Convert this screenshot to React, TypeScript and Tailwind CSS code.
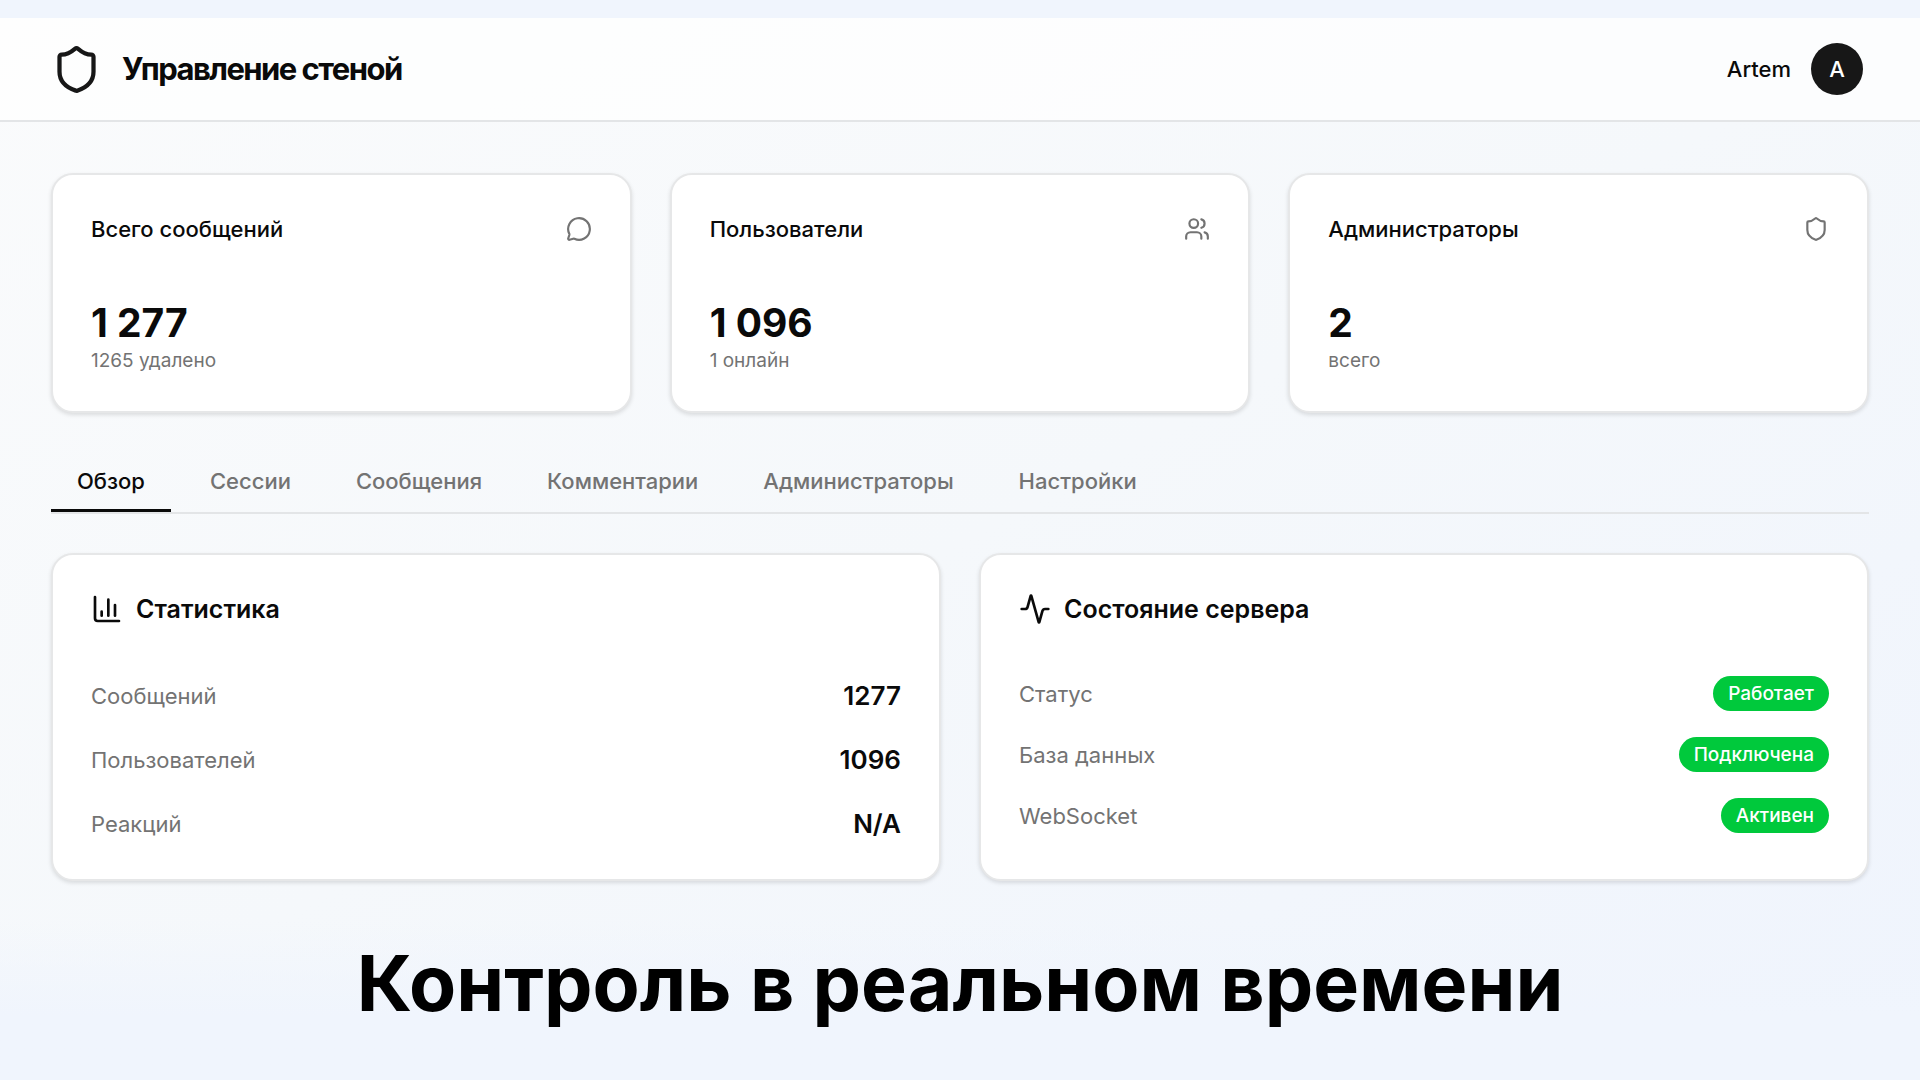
import type { ReactNode } from "react";
import { Activity, MessageCircle, Shield, Users } from "lucide-react";

function ChartIcon() {
  return (
    <svg viewBox="0 0 24 24" fill="none" stroke="currentColor" strokeWidth="2" strokeLinecap="round" strokeLinejoin="round" className="size-8" aria-hidden="true">
      <path d="M3 3v16a2 2 0 0 0 2 2h16" />
      <path d="M18 17V9" />
      <path d="M13 17V5" />
      <path d="M8 17v-3" />
    </svg>
  );
}

const card = "rounded-[22px] border-2 border-[#e6e7e8] bg-white shadow-[0_2px_4px_rgba(0,0,0,0.12)]";

function StatCard({ title, value, note, icon }: { title: string; value: string; note: string; icon: ReactNode }) {
  return (
    <section className={`${card} p-[38px]`}>
      <div className="flex items-center justify-between">
        <h2 className="text-[22px] leading-8 font-medium">{title}</h2>
        <span className="text-[#737373]">{icon}</span>
      </div>
      <p className="mt-[52px] text-[39px] leading-[52px] font-bold">{value}</p>
      <p className="text-[19px] leading-6 text-[#737373]">{note}</p>
    </section>
  );
}

function PanelTitle({ icon, children }: { icon: ReactNode; children: string }) {
  return (
    <h2 className="flex items-center gap-[13px] text-[25px] leading-8 font-semibold">
      {icon}
      {children}
    </h2>
  );
}

const tabs = ["Обзор", "Сессии", "Сообщения", "Комментарии", "Администраторы", "Настройки"];

const stats = [
  ["Сообщений", "1277"],
  ["Пользователей", "1096"],
  ["Реакций", "N/A"],
];

const services = [
  ["Статус", "Работает"],
  ["База данных", "Подключена"],
  ["WebSocket", "Активен"],
];

export default function App() {
  return (
    <div className="min-h-screen bg-[#f0f5fd] pt-[18px] font-[Inter,sans-serif] text-[#0a0a0a]">
      <div className="bg-linear-to-br from-[#fafbfc] via-[#f5f8fb] to-[#eff4fd]">
        <header className="flex items-center justify-between border-b-2 border-[#e3e5e7] bg-white/70 py-[25px] pr-[57px] pl-[51px]">
          <div className="flex items-center gap-5">
            <Shield className="size-[51px] text-[#171717]" strokeWidth={2} />
            <h1 className="text-[31px] leading-10 font-bold tracking-tighter">Управление стеной</h1>
          </div>
          <div className="flex items-center gap-5">
            <span className="text-[22px] leading-8 font-medium">Artem</span>
            <span className="flex size-[52px] items-center justify-center rounded-full bg-[#171717] text-[22px] font-medium text-white">A</span>
          </div>
        </header>

        <main className="px-[51px] pt-[51px]">
          <div className="grid grid-cols-3 gap-[38px]">
            <StatCard title="Всего сообщений" value="1 277" note="1265 удалено" icon={<MessageCircle className="size-[26px]" />} />
            <StatCard title="Пользователи" value="1 096" note="1 онлайн" icon={<Users className="size-[26px]" />} />
            <StatCard title="Администраторы" value="2" note="всего" icon={<Shield className="size-[26px]" />} />
          </div>

          <nav role="tablist" className="mt-[39px] flex gap-[13px] border-b-2 border-[#e3e5e7]">
            {tabs.map((tab, i) => (
              <button
                key={tab}
                type="button"
                role="tab"
                aria-selected={i === 0}
                className="border-b-[3px] border-transparent px-[26px] pt-[13px] pb-3 text-[22px] leading-8 font-medium text-[#737373] aria-selected:border-[#0a0a0a] aria-selected:text-[#0a0a0a]"
              >
                {tab}
              </button>
            ))}
          </nav>

          <div className="mt-[39px] grid grid-cols-2 gap-[38px] pb-[39px]">
            <section className={`${card} px-[38px] pt-[38px] pb-[35px]`}>
              <PanelTitle icon={<ChartIcon />}>Статистика</PanelTitle>
              <dl className="mt-[51px] flex flex-col gap-6">
                {stats.map(([label, value]) => (
                  <div key={label} className="flex items-center justify-between leading-10">
                    <dt className="text-[22px] text-[#737373]">{label}</dt>
                    <dd className="text-[26px] font-semibold">{value}</dd>
                  </div>
                ))}
              </dl>
            </section>
            <section className={`${card} px-[38px] pt-[38px] pb-[35px]`}>
              <PanelTitle icon={<Activity className="size-8" />}>Состояние сервера</PanelTitle>
              <dl className="mt-[51px] flex flex-col gap-[26px]">
                {services.map(([label, value]) => (
                  <div key={label} className="flex items-center justify-between">
                    <dt className="text-[22px] leading-8 text-[#737373]">{label}</dt>
                    <dd className="rounded-full bg-[#00c93c] px-[15px] py-[5px] text-[19px] leading-[25px] font-medium text-white">{value}</dd>
                  </div>
                ))}
              </dl>
            </section>
          </div>
        </main>

        <div className="bg-linear-to-b from-transparent to-[#f0f5fd] to-60% pt-[9px] pb-[42px] text-center">
          <p className="text-[77px] leading-[108px] font-bold text-black">Контроль в реальном времени</p>
        </div>
      </div>
    </div>
  );
}
